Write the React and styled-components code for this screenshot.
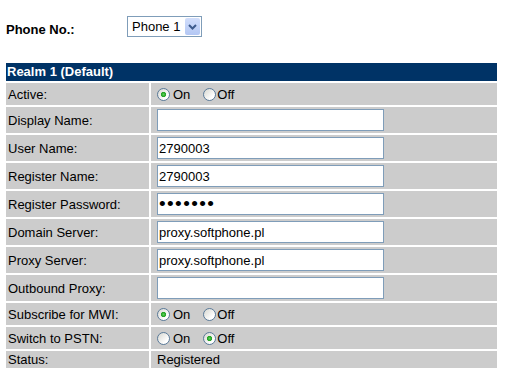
import React from "react";
import styled, { createGlobalStyle } from "styled-components";

const GlobalStyle = createGlobalStyle`
  body {
    margin: 0;
    background: #ffffff;
    font-family: "Liberation Sans", Arial, sans-serif;
    font-size: 13px;
    color: #000000;
  }
`;

const Page = styled.div`
  padding: 16px 9px 0 6px;
`;

const PhoneRow = styled.div`
  display: flex;
  align-items: flex-start;
  height: 21px;
`;

const PhoneLabel = styled.div`
  width: 121px;
  margin-top: 6px;
  font-weight: bold;
  line-height: 15px;
`;

const SelectBox = styled.div`
  display: flex;
  align-items: center;
  box-sizing: border-box;
  width: 75px;
  height: 21px;
  border: 1px solid #7f9db9;
  background: #ffffff;
`;

const Select = styled.select`
  appearance: none;
  -webkit-appearance: none;
  flex: 1;
  min-width: 0;
  border: none;
  outline: none;
  background: transparent;
  font-family: "Liberation Sans", Arial, sans-serif;
  font-size: 13px;
  color: #000000;
  padding: 0 0 0 4px;
`;

const ArrowButton = styled.span`
  display: flex;
  align-items: center;
  justify-content: center;
  width: 15px;
  height: 17px;
  margin-right: 1px;
  border-radius: 2px;
  background: linear-gradient(#d2defb, #b3c7f4);
`;

const Table = styled.div`
  display: grid;
  grid-template-columns: 143px 346px;
  gap: 2px;
  margin-top: 26px;
`;

const HeaderCell = styled.div`
  grid-column: 1 / -1;
  height: 18px;
  line-height: 18px;
  padding-left: 1px;
  background: #003366;
  color: #ffffff;
  font-weight: bold;
`;

const LabelCell = styled.div`
  display: flex;
  align-items: center;
  height: ${(p) => p.$h}px;
  padding-left: 2px;
  background: #cccccc;
`;

const ValueCell = styled.div`
  display: flex;
  align-items: center;
  height: ${(p) => p.$h}px;
  padding-left: 6px;
  background: #cccccc;
`;

const TextInput = styled.input`
  box-sizing: border-box;
  width: 227px;
  height: 22px;
  margin: 0;
  padding: 0 1px;
  border: 1px solid #7f9db9;
  background: #ffffff;
  font-family: "Liberation Sans", Arial, sans-serif;
  font-size: ${(p) => (p.type === "password" ? 19 : 13)}px;
  letter-spacing: ${(p) => (p.type === "password" ? 1.4 : 0)}px;
  color: #000000;
  outline: none;
`;

const RadioGroup = styled.div`
  display: flex;
  align-items: center;
  gap: 13px;
`;

const RadioOption = styled.label`
  display: flex;
  align-items: center;
  gap: ${(p) => p.$gap}px;
`;

const Radio = styled.input`
  appearance: none;
  -webkit-appearance: none;
  box-sizing: border-box;
  width: 13px;
  height: 13px;
  margin: 0;
  border: 1px solid #5a7a99;
  border-radius: 50%;
  background: linear-gradient(135deg, #d6d6d0, #ffffff 75%);

  &:checked {
    background: radial-gradient(circle, #5cd35c 0, #21a121 2.2px, transparent 3px),
      linear-gradient(135deg, #d6d6d0, #ffffff 75%);
  }
`;

const rows = [
  { label: "Active:", kind: "radio", on: true, name: "active" },
  { label: "Display Name:", kind: "text", value: "" },
  { label: "User Name:", kind: "text", value: "2790003" },
  { label: "Register Name:", kind: "text", value: "2790003" },
  { label: "Register Password:", kind: "password", value: "1234567" },
  { label: "Domain Server:", kind: "text", value: "proxy.softphone.pl" },
  { label: "Proxy Server:", kind: "text", value: "proxy.softphone.pl" },
  { label: "Outbound Proxy:", kind: "text", value: "" },
  { label: "Subscribe for MWI:", kind: "radio", on: true, name: "mwi" },
  { label: "Switch to PSTN:", kind: "radio", on: false, name: "pstn" },
  { label: "Status:", kind: "status", value: "Registered" },
];

const heights = { radio: 22, text: 26, password: 26, status: 17 };

const OnOff = ({ name, on }) => (
  <RadioGroup>
    <RadioOption $gap={3}>
      <Radio type="radio" name={name} defaultChecked={on} />
      On
    </RadioOption>
    <RadioOption $gap={1}>
      <Radio type="radio" name={name} defaultChecked={!on} />
      Off
    </RadioOption>
  </RadioGroup>
);

const App = () => {
  return (
    <Page>
      <GlobalStyle />
      <PhoneRow>
        <PhoneLabel>Phone No.:</PhoneLabel>
        <SelectBox>
          <Select defaultValue="1">
            <option value="1">Phone 1</option>
            <option value="2">Phone 2</option>
          </Select>
          <ArrowButton>
            <svg width="9" height="6" viewBox="0 0 9 6">
              <path d="M1 1 L4.5 4.5 L8 1" fill="none" stroke="#3d5a8c" strokeWidth="2" />
            </svg>
          </ArrowButton>
        </SelectBox>
      </PhoneRow>
      <Table>
        <HeaderCell>Realm 1 (Default)</HeaderCell>
        {rows.map((row) => {
          const h = heights[row.kind];
          return (
            <React.Fragment key={row.label}>
              <LabelCell $h={h}>{row.label}</LabelCell>
              <ValueCell $h={h}>
                {row.kind === "radio" && <OnOff name={row.name} on={row.on} />}
                {(row.kind === "text" || row.kind === "password") && (
                  <TextInput type={row.kind} defaultValue={row.value} />
                )}
                {row.kind === "status" && row.value}
              </ValueCell>
            </React.Fragment>
          );
        })}
      </Table>
    </Page>
  );
};

export default App;
